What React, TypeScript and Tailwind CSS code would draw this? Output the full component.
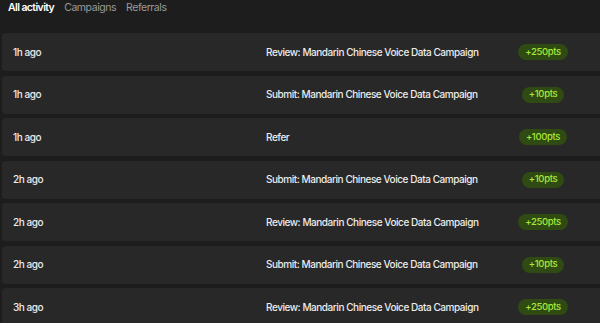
import React from "react";

const rows = [
  { t: "1h ago", title: "Review: Mandarin Chinese Voice Data Campaign", pts: "+250pts" },
  { t: "1h ago", title: "Submit: Mandarin Chinese Voice Data Campaign", pts: "+10pts" },
  { t: "1h ago", title: "Refer", pts: "+100pts" },
  { t: "2h ago", title: "Submit: Mandarin Chinese Voice Data Campaign", pts: "+10pts" },
  { t: "2h ago", title: "Review: Mandarin Chinese Voice Data Campaign", pts: "+250pts" },
  { t: "2h ago", title: "Submit: Mandarin Chinese Voice Data Campaign", pts: "+10pts" },
  { t: "3h ago", title: "Review: Mandarin Chinese Voice Data Campaign", pts: "+250pts" },
];

export default function App() {
  return (
    <div
      className="w-[600px] h-[323px] overflow-hidden bg-[#1d1d1d] text-[10px] tracking-[-0.45px]"
      style={{ fontFamily: "Inter, 'Noto Sans', sans-serif" }}
    >
      <div className="flex items-center h-[16px] pl-[8px] gap-[10px] text-[10.5px]">
        <span className="text-white font-semibold tracking-[-0.6px]">All activity</span>
        <span className="text-[#9a9a9a] tracking-[-0.45px]">Campaigns</span>
        <span className="text-[#9a9a9a] tracking-[-0.45px]">Referrals</span>
      </div>
      <div className="flex flex-col gap-[4.5px] pt-[17px] pl-[2px]">
        {rows.map((r, i) => (
          <div
            key={i}
            className="flex items-center h-[38px] w-[620px] rounded-[4px] bg-[#282828] text-[#ececec] font-medium"
          >
            <div className="w-[264px] pl-[11px] whitespace-nowrap">{r.t}</div>
            <div className="w-[240px] whitespace-nowrap">{r.title}</div>
            <div className="w-[74px] flex justify-center">
              <span className="rounded-full bg-[#2f4a12] text-[#a8e83a] text-[9.5px] font-medium tracking-[-0.35px] px-[7px] h-[16px] flex items-center whitespace-nowrap">
                {r.pts}
              </span>
            </div>
          </div>
        ))}
      </div>
    </div>
  );
}
